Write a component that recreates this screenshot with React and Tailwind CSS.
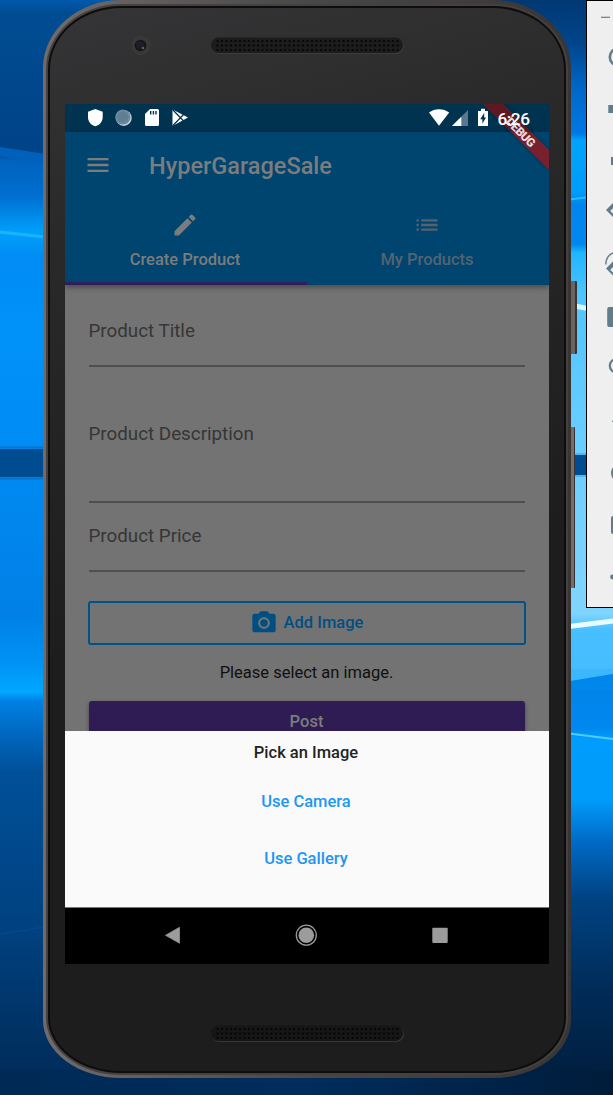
import React from "react";

function Wallpaper() {
  return (
    <svg className="absolute inset-0" width="613" height="1095" viewBox="0 0 613 1095">
      <defs>
        <linearGradient id="wl" x1="0" y1="0" x2="0" y2="1095" gradientUnits="userSpaceOnUse">
          <stop offset="0" stopColor="#0059ad" />
          <stop offset="0.012" stopColor="#004c92" />
          <stop offset="0.138" stopColor="#004388" />
          <stop offset="0.146" stopColor="#0062bd" />
          <stop offset="0.18" stopColor="#0070d2" />
          <stop offset="0.212" stopColor="#00a0fb" />
          <stop offset="0.235" stopColor="#008cf4" />
          <stop offset="0.3" stopColor="#0092fa" />
          <stop offset="0.4" stopColor="#008df5" />
          <stop offset="0.56" stopColor="#0080e6" />
          <stop offset="0.605" stopColor="#0092f5" />
          <stop offset="0.632" stopColor="#00a8ff" />
          <stop offset="0.64" stopColor="#0081e4" />
          <stop offset="0.67" stopColor="#0068c0" />
          <stop offset="0.705" stopColor="#005099" />
          <stop offset="0.85" stopColor="#00417f" />
          <stop offset="0.93" stopColor="#003468" />
          <stop offset="1" stopColor="#002a56" />
        </linearGradient>
        <linearGradient id="wr" x1="0" y1="0" x2="0" y2="1095" gradientUnits="userSpaceOnUse">
          <stop offset="0" stopColor="#003973" />
          <stop offset="0.04" stopColor="#00458c" />
          <stop offset="0.08" stopColor="#0067c8" />
          <stop offset="0.122" stopColor="#0078e6" />
          <stop offset="0.128" stopColor="#00a4fc" />
          <stop offset="0.175" stopColor="#009cfb" />
          <stop offset="0.187" stopColor="#0085ef" />
          <stop offset="0.223" stopColor="#0088ee" />
          <stop offset="0.231" stopColor="#20b6ff" />
          <stop offset="0.27" stopColor="#4ec5ff" />
          <stop offset="0.41" stopColor="#6bceff" />
          <stop offset="0.56" stopColor="#80d5ff" />
          <stop offset="0.575" stopColor="#48bfff" />
          <stop offset="0.61" stopColor="#45bdff" />
          <stop offset="0.626" stopColor="#0084ea" />
          <stop offset="0.665" stopColor="#0088ee" />
          <stop offset="0.674" stopColor="#009cff" />
          <stop offset="0.73" stopColor="#009cfa" />
          <stop offset="0.77" stopColor="#0069c4" />
          <stop offset="0.82" stopColor="#004383" />
          <stop offset="0.9" stopColor="#002c59" />
          <stop offset="1" stopColor="#001c3a" />
        </linearGradient>
        <linearGradient id="wb" x1="0" x2="1" y1="0" y2="0">
          <stop offset="0" stopColor="#002a56" />
          <stop offset="0.5" stopColor="#002d5c" />
          <stop offset="1" stopColor="#001c3a" />
        </linearGradient>
      </defs>
      <rect width="300" height="1095" fill="url(#wl)" />
      <rect x="300" width="313" height="1095" fill="url(#wr)" />
      <rect y="1070" width="613" height="25" fill="url(#wb)" />
      <path d="M0 147 L45 154 V164 L0 156Z" fill="#0060ba" />
      <path d="M0 232 L45 237" stroke="#24b9ff" strokeWidth="3" opacity=".8" />
      <path d="M0 449 H45 V477 H0Z" fill="#004c90" />
      <path d="M0 447.5 H45 M0 478.5 H45" stroke="#0074cc" strokeWidth="2" />
      <path d="M0 934 L45 927" stroke="#005099" strokeWidth="1.5" opacity=".6" />
      <path d="M565 200 L590 197" stroke="#2bb8ff" strokeWidth="2" />
      <path d="M565 304 L590 309" stroke="#d6f6ff" strokeWidth="5" />
      <path d="M565 455 H590 V475 H565Z" fill="#004c90" />
      <path d="M565 454 H590 M565 476 H590" stroke="#4db9f2" strokeWidth="2" />
      <path d="M565 627 L613 621" stroke="#e8fbff" strokeWidth="5" />
      <path d="M565 671 H613 V674 L565 682Z" fill="#3ab8fb" />
      <path d="M565 682 L613 674 V690 H565Z" fill="#0087ec" />
      <path d="M565 733 L613 739" stroke="#52ccff" strokeWidth="1.8" />
    </svg>
  );
}

function Speaker({ light }) {
  const dots = [];
  for (let i = 0; i < 41; i++) {
    for (let r = 0; r < 3; r++) {
      dots.push(<circle key={i + "-" + r} cx={7.5 + i * 4.5} cy={4 + r * 4.5} r="1.1" />);
    }
  }
  return (
    <svg width="195" height="18" viewBox="0 0 195 18">
      <rect x="1.5" y="1.5" width="192.5" height="15.5" rx="7.7" fill={light ? "#3c3c3c" : "#363636"} />
      <rect x="1" y="0.5" width="192" height="15.5" rx="7.7" fill={light ? "#1c1c1c" : "#161616"} />
      <g fill="#050505">{dots}</g>
    </svg>
  );
}

function StatusBar() {
  return (
    <div className="h-7 shrink-0 bg-[#003350]">
      <svg width="484" height="28" viewBox="65 104 484 28">
        <path d="M95.3 109 L102.7 111.7 V117 C102.7 121.8 99.5 125.2 95.3 126.3 C91 125.2 88 121.8 88 117 V111.7Z" fill="#fff" />
        <circle cx="123.7" cy="117.9" r="8" fill="#c3d0d8" />
        <circle cx="122.8" cy="117" r="7.6" fill="#5f7f95" />
        <circle cx="122.8" cy="117" r="6.2" fill="none" stroke="#91a8b7" strokeWidth="1" strokeDasharray="1 1" />
        <path d="M150 109 H157.5 Q159 109 159 110.5 V124.5 Q159 126 157.5 126 H146.5 Q145 126 145 124.5 V114Z" fill="#fff" />
        <path d="M150.7 111 V114.5 M153.4 111 V114.5 M156 111 V114.5" stroke="#003350" strokeWidth="1.4" />
        <path d="M172.5 109.5 L188 117.5 L172.5 126Z" fill="#fff" />
        <path d="M172.5 109.5 L184.5 122 M172.5 126 L184.5 113.5" stroke="#003350" strokeWidth="1.2" />
        <path d="M429 112.5 C434.5 108 443.5 108 449.2 112.5 L439 125.8Z" fill="#fff" />
        <path d="M452 126 L468 110 V126Z" fill="#59788d" />
        <path d="M452 126 L461.3 116.7 V126Z" fill="#fff" />
        <path d="M478 111 H481 V108.8 H485 V111 H488 V126 H478Z" fill="#fff" />
        <path d="M484.2 113 L480.2 119.2 H482.4 V123.8 L486 117.6 H484.2Z" fill="#003350" />
      </svg>
    </div>
  );
}

function DebugBanner() {
  return (
    <div className="pointer-events-none absolute top-0 right-0 z-20 size-[80px] overflow-hidden">
      <svg width="80" height="80" viewBox="469 104 80 80">
        <defs>
          <filter id="bs" x="-30%" y="-30%" width="160%" height="160%">
            <feGaussianBlur stdDeviation="2.5" />
          </filter>
        </defs>
        <path d="M483 104 H503 L549 150 V170Z" fill="#000" opacity=".35" filter="url(#bs)" />
        <path d="M483 104 H503 L549 150 V170Z" fill="#78202e" />
        <path d="M483 104 H503 L531 132 H511Z" fill="#5e1824" />
        <text x="497.5" y="124.6" fontSize="17.3" fontWeight="500" fill="#fff" textLength="32.5" className="font-['Roboto',sans-serif]">6:26</text>
        <text transform="translate(520.8 132.2) rotate(45)" textAnchor="middle" y="4.3" fontSize="12" fontWeight="900" fill="#fff" fillOpacity=".85" textLength="36" className="font-['Roboto',sans-serif]">DEBUG</text>
      </svg>
    </div>
  );
}

function Tab({ label, active, children }) {
  return (
    <div className={active ? "flex w-1/2 flex-col items-center text-[#7c7c7c]" : "flex w-1/2 flex-col items-center text-[#53636f]"}>
      <svg className="mt-[13px] mr-[2px]" width="28" height="28" viewBox="0 0 24 24" fill="currentColor">{children}</svg>
      <span className="mt-[11px] mr-[2px] h-5 text-[16.5px] leading-5 font-medium">{label}</span>
      <span className={active ? "mt-3 h-[3px] w-full bg-[#2f1d5c]" : "mt-3 h-[3px] w-full"} />
    </div>
  );
}

function Field({ label, className }) {
  return (
    <div className={"flex shrink-0 border-b-2 border-[#4f4f4f] text-[18.8px] leading-6 text-[#363636] " + className}>{label}</div>
  );
}

function Screen() {
  return (
    <div className="relative flex h-[860px] w-[484px] shrink-0 flex-col overflow-hidden bg-[#737373]">
      <StatusBar />
      <header className="z-10 h-[153px] shrink-0 bg-[#00456f] shadow-[0_2px_6px_rgba(0,0,0,0.4)]">
        <div className="flex h-[66px] items-center pl-[18.5px] text-[#7c7c7c]">
          <svg width="28" height="28" viewBox="0 0 24 24" fill="currentColor">
            <path d="M3 18h18v-2H3v2zm0-5h18v-2H3v2zm0-7v2h18V6H3z" />
          </svg>
          <h1 className="mt-1 ml-[37.5px] text-[23.5px] leading-none font-medium">HyperGarageSale</h1>
        </div>
        <div className="flex h-[87px]">
          <Tab label="Create Product" active>
            <path d="M3 17.25V21h3.75L17.81 9.94l-3.75-3.75L3 17.25zM20.71 7.04a.996.996 0 0 0 0-1.41l-2.34-2.34a.996.996 0 0 0-1.41 0l-1.83 1.83 3.75 3.75 1.83-1.83z" />
          </Tab>
          <Tab label="My Products">
            <path d="M3 13h2v-2H3v2zm0 4h2v-2H3v2zm0-8h2V7H3v2zm4 4h14v-2H7v2zm0 4h14v-2H7v2zM7 7v2h14V7H7z" />
          </Tab>
        </div>
      </header>
      <main className="flex h-[446px] shrink-0 flex-col overflow-hidden pr-[24.5px] pl-[23.5px]">
        <Field label="Product Title" className="mt-[34px] h-[48px]" />
        <Field label="Product Description" className="mt-[55px] h-[81px]" />
        <Field label="Product Price" className="mt-[21px] h-[48px]" />
        <button className="-mx-px mt-[29px] flex h-[44px] shrink-0 items-center justify-center gap-[6px] rounded-[3px] border-2 border-[#00538a] text-[16.5px] font-medium text-[#004f82]">
          <svg width="28" height="28" viewBox="0 0 24 24" fill="currentColor">
            <circle cx="12" cy="12" r="3.2" />
            <path d="M9 2L7.17 4H4c-1.1 0-2 .9-2 2v12c0 1.1.9 2 2 2h16c1.1 0 2-.9 2-2V6c0-1.1-.9-2-2-2h-3.17L15 2H9zm3 15c-2.76 0-5-2.24-5-5s2.24-5 5-5 5 2.24 5 5-2.24 5-5 5z" />
          </svg>
          Add Image
        </button>
        <p className="mt-[18px] shrink-0 text-center text-[16.5px] leading-5 text-[#101010]">Please select an image.</p>
        <button className="mt-[18px] h-[42px] shrink-0 rounded-[3px] bg-[#2f1c54] text-[16.5px] font-medium text-[#7c7c7c] shadow-[0_2px_4px_rgba(0,0,0,0.4)]">Post</button>
      </main>
      <section className="flex h-[177px] shrink-0 flex-col items-center border-b border-[#777] bg-[#fafafa] pr-[2px] text-[16.5px] leading-5 font-medium text-[#2196f3]">
        <h2 className="mt-[12px] text-[#222]">Pick an Image</h2>
        <button className="mt-[29px] leading-5">Use Camera</button>
        <button className="mt-[37px] leading-5">Use Gallery</button>
      </section>
      <nav className="flex h-14 bg-black">
        <svg width="484" height="56" viewBox="65 908 484 56" fill="#9c9c9c">
          <path d="M165.5 935.3 L179.5 927.3 V943.3Z" stroke="#9c9c9c" strokeWidth=".7" strokeLinejoin="round" />
          <circle cx="306.3" cy="935.2" r="10" fill="none" stroke="#9c9c9c" strokeWidth="1.3" />
          <circle cx="306.3" cy="935.2" r="7.8" />
          <rect x="432.3" y="927.8" width="15.4" height="15.2" rx="1" />
        </svg>
      </nav>
      <DebugBanner />
    </div>
  );
}

function EmulatorToolbar() {
  return (
    <aside className="absolute top-0 left-[586px] h-[608px] w-[40px] border border-black bg-[#efefef]">
      <svg width="26" height="606" viewBox="587 1 26 606" fill="#607d8b">
        <rect x="601" y="16.7" width="9" height="1.2" />
        <circle cx="618.5" cy="57" r="8.7" fill="none" stroke="#607d8b" strokeWidth="2.6" />
        <path d="M608.3 105 H613 V113 H608.3Z M611 157 H613 V165 H611Z" />
        <path d="M606 210 L613 203 V217Z" />
        <path d="M610.2 211 L613 208.2 V213.5Z" fill="#efefef" />
        <path d="M606 268.5 L613 261.5 V275.5Z" />
        <path d="M610.2 270 L613 267 V272.5Z" fill="#efefef" />
        <path d="M605.8 264.5 C605.8 259 609 254.5 613.5 252.8" fill="none" stroke="#607d8b" strokeWidth="1.4" />
        <rect x="607.2" y="307" width="16" height="20" rx="2" />
        <circle cx="616.5" cy="365.7" r="6.7" fill="none" stroke="#607d8b" strokeWidth="2.2" />
        <path d="M611.8 421.3 L614 419.5 V423Z" />
        <circle cx="620" cy="473" r="9" />
        <rect x="611" y="516" width="14" height="18" rx="2" />
        <circle cx="612.5" cy="577" r="2.4" />
      </svg>
    </aside>
  );
}

export default function App() {
  return (
    <div className="relative h-[1095px] w-[613px] overflow-hidden font-['Roboto',sans-serif]">
      <Wallpaper />
      <div className="absolute top-[281px] left-[570px] h-[73px] w-[7px] rounded-r-[1px] border-r-2 border-[#393433] bg-[#6a6362]" />
      <div className="absolute top-[427px] left-[570px] h-[161px] w-[5px] rounded-r-[1px] border-r border-[#393433] bg-[#746d6b]" />
      <div className="relative ml-[43px] h-[1078px] w-[528px] rounded-[78px/68px] rounded-b-[78px_58px] bg-linear-to-r from-[#716c6b] via-[#484848] to-[#393535] p-[3px] pt-[4px] [border-radius:78px_78px_78px_78px/68px_68px_60px_60px]">
        <div className="h-full bg-[#454141] p-[2px] [border-radius:75px_75px_75px_75px/65px_65px_57px_57px]">
          <div className="flex h-full flex-col items-center border-2 border-[#0d0d0d] bg-[linear-gradient(165deg,#353537_0%,#292929_20%,#1d1d1d_55%,#1d1d1d_100%)] [border-radius:73px_73px_73px_73px/63px_63px_55px_55px]">
            <div className="relative flex h-[96px] w-full shrink-0 justify-center pt-[29px]">
              <svg className="absolute top-[27px] left-[80px]" width="22" height="22" viewBox="0 0 22 22">
                <circle cx="11" cy="10.5" r="9.8" fill="#383839" />
                <circle cx="10.5" cy="10.5" r="5.8" fill="#151519" />
                <circle cx="10" cy="10" r="4" fill="#201d29" />
                <circle cx="13" cy="13" r="1.3" fill="#74525a" />
              </svg>
              <Speaker light />
            </div>
            <Screen />
            <div className="mt-[61px]"><Speaker /></div>
          </div>
        </div>
      </div>
      <EmulatorToolbar />
    </div>
  );
}
